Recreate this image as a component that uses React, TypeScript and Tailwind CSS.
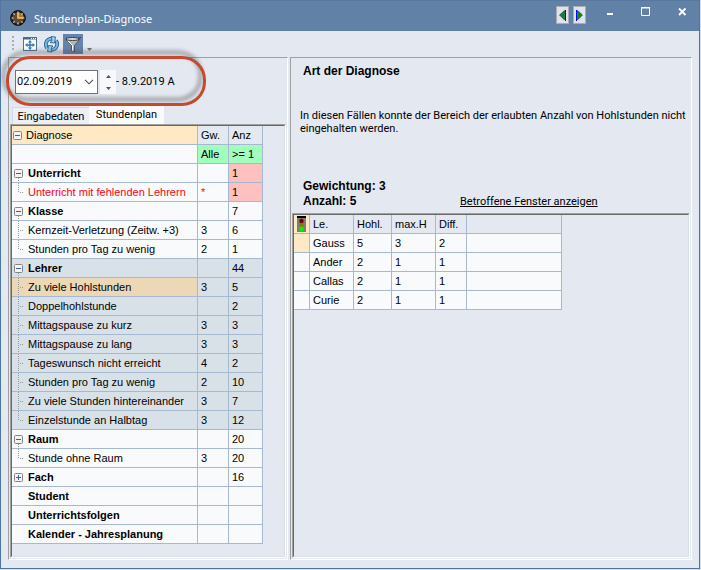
import { useState, type ReactNode } from "react";

type Item = { name: string; gw?: string; anz: string; alert?: boolean };
type Group = { name: string; anz: string; alert?: boolean; items?: Item[] };

const groups: Group[] = [
  {
    name: "Unterricht",
    anz: "1",
    alert: true,
    items: [{ name: "Unterricht mit fehlenden Lehrern", gw: "*", anz: "1", alert: true }],
  },
  {
    name: "Klasse",
    anz: "7",
    items: [
      { name: "Kernzeit-Verletzung (Zeitw. +3)", gw: "3", anz: "6" },
      { name: "Stunden pro Tag zu wenig", gw: "2", anz: "1" },
    ],
  },
  {
    name: "Lehrer",
    anz: "44",
    items: [
      { name: "Zu viele Hohlstunden", gw: "3", anz: "5" },
      { name: "Doppelhohlstunde", anz: "2" },
      { name: "Mittagspause zu kurz", gw: "3", anz: "3" },
      { name: "Mittagspause zu lang", gw: "3", anz: "3" },
      { name: "Tageswunsch nicht erreicht", gw: "4", anz: "2" },
      { name: "Stunden pro Tag zu wenig", gw: "2", anz: "10" },
      { name: "Zu viele Stunden hintereinander", gw: "3", anz: "7" },
      { name: "Einzelstunde an Halbtag", gw: "3", anz: "12" },
    ],
  },
  { name: "Raum", anz: "20", items: [{ name: "Stunde ohne Raum", gw: "3", anz: "20" }] },
  { name: "Fach", anz: "16", items: [] },
  { name: "Student", anz: "" },
  { name: "Unterrichtsfolgen", anz: "" },
  { name: "Kalender - Jahresplanung", anz: "" },
];

const teachers = [
  ["Gauss", "5", "3", "2"],
  ["Ander", "2", "1", "1"],
  ["Callas", "2", "1", "1"],
  ["Curie", "2", "1", "1"],
];

const cell = "h-[19px] overflow-hidden border-r border-b border-[#a6b9d1] p-0 text-left font-normal";

const ToggleBox = ({ open, line }: { open: boolean; line?: boolean }) => (
  <svg width="16" height="18" viewBox="0 0 16 18" className="block">
    {line && <path d="M6.5 14V18" stroke="#9a9a9a" strokeDasharray="1 1" />}
    <rect x="2.5" y="5.5" width="8" height="8" rx="1" fill="#f4f4f4" stroke="#858585" />
    <path d={open ? "M4 9.5H9" : "M4 9.5H9M6.5 7V12"} stroke="#3f5fa8" />
  </svg>
);

const Branch = ({ last }: { last: boolean }) => (
  <svg width="16" height="18" viewBox="0 0 16 18" className="block shrink-0">
    <path d={last ? "M6.5 0V10" : "M6.5 0V18"} stroke="#9a9a9a" strokeDasharray="1 1" />
    <path d="M8 9.5H12" stroke="#9a9a9a" strokeDasharray="1 1" />
  </svg>
);

const Sunken = ({ children }: { children: ReactNode }) => (
  <div className="mx-px mb-px flex flex-1 flex-col border border-t-[#a0a0a0] border-r-white border-b-white border-l-[#a0a0a0]">
    <div className="flex-1 border border-t-[#696969] border-r-[#dbe0e6] border-b-[#dbe0e6] border-l-[#696969]">
      {children}
    </div>
  </div>
);

const TitleBar = () => (
  <header className="flex h-[31px] shrink-0 items-start border-t border-[#57799f] bg-[#6182a6] pl-[9px] text-white">
    <svg width="16" height="16" viewBox="0 0 16 16" className="mt-[9px]">
      <circle cx="8" cy="8" r="7.4" fill="#1d1a19" stroke="#15100e" />
      <circle cx="8" cy="8" r="5.8" fill="#5c4a3c" />
      <path d="M8 8V2.2A5.8 5.8 0 0 1 13.8 8Z" fill="#a5764a" />
      <path
        d="M8 1.5V3.5M8 12.5V14.5M1.5 8H3.5M12.5 8H14.5M3.4 3.4L4.6 4.6M12.6 3.4L11.4 4.6M3.4 12.6L4.6 11.4M12.6 12.6L11.4 11.4"
        stroke="#e8dfd4"
        strokeWidth="1.2"
      />
      <path d="M8 3V8H13" fill="none" stroke="#ffc938" strokeWidth="1.6" />
    </svg>
    <h1 className="ml-2 pt-[10px] font-['Noto_Sans',sans-serif] text-[11px] leading-4">Stundenplan-Diagnose</h1>
    <div className="mt-[5px] ml-auto flex gap-1">
      <button aria-label="Zurück" className="h-[18px] w-[13px] border border-[#a9adb2] bg-[#dfe4ea]">
        <svg width="11" height="16" viewBox="0 0 11 16">
          <path d="M7.5 3.5V13L2.5 8Z" fill="#0b8a1c" stroke="#123c3a" strokeWidth=".6" />
          <path d="M8.5 3V14" stroke="#0000ff" />
        </svg>
      </button>
      <button aria-label="Vor" className="h-[18px] w-[13px] border border-[#a9adb2] bg-[#dfe4ea]">
        <svg width="11" height="16" viewBox="0 0 11 16">
          <path d="M3.5 3.5V13L8.5 8Z" fill="#0b8a1c" stroke="#123c3a" strokeWidth=".6" />
          <path d="M2.5 3V14" stroke="#0000ff" />
        </svg>
      </button>
    </div>
    <div className="mt-[5px] mr-3 ml-5 flex gap-7">
      <button aria-label="Minimieren">
        <svg width="7" height="11" viewBox="0 0 7 11">
          <path d="M1 8H7" stroke="#fff" strokeWidth="2" />
        </svg>
      </button>
      <button aria-label="Maximieren">
        <svg width="9" height="11" viewBox="0 0 9 11">
          <path d="M.5 1V9.5H8.5V1M0 2H9" fill="none" stroke="#fff" />
          <path d="M0 1.5H9" stroke="#fff" />
        </svg>
      </button>
      <button aria-label="Schließen">
        <svg width="9" height="11" viewBox="0 0 9 11">
          <path d="M1 2.5L7.5 9M7.5 2.5L1 9" stroke="#fff" strokeWidth="1.8" />
        </svg>
      </button>
    </div>
  </header>
);

const Toolbar = () => (
  <div className="flex h-[26px] shrink-0 items-start pt-[3px] pl-[11px]">
    <svg width="3" height="20" viewBox="0 0 3 20">
      <path d="M1 2V18" stroke="#a9aeb6" strokeWidth="2" strokeDasharray="2 2" />
    </svg>
    <button aria-label="Fenster anpassen" className="ml-2">
      <svg width="14" height="20" viewBox="0 0 14 20">
        <rect x=".5" y="3.5" width="13" height="13" fill="#fff" stroke="#54718f" />
        <path d="M0 4.5H14" stroke="#47688a" strokeWidth="2" />
        <path d="M8 4.5H9M10 4.5H11M12 4.5H13" stroke="#fff" />
        <path d="M7 7V15M3 11H11" stroke="#2f78b4" strokeWidth="1.4" />
        <path d="M7 6L5 8.5H9ZM7 16L5 13.5H9ZM2 11L4.5 9V13ZM12 11L9.5 9V13Z" fill="#2f78b4" />
      </svg>
    </button>
    <button aria-label="Aktualisieren" className="ml-[7px]">
      <svg width="15" height="20" viewBox="0 0 15 20">
        <g fill="none" strokeLinejoin="round">
          <path d="M3 14C.6 10.5 2 5 7.5 4.8M12 6.5C14.4 10 13 15.5 7.5 15.7" stroke="#1e537f" strokeWidth="3.6" />
          <path d="M3 14C.6 10.5 2 5 7.5 4.8M12 6.5C14.4 10 13 15.5 7.5 15.7" stroke="#72b9e8" strokeWidth="2" />
        </g>
        <path d="M7 2.5L11.5 3L10.5 9L6 8.5L8 6.8ZM8 18L3.5 17.5L4.5 11.5L9 12L7 13.8Z" fill="#9ed2f2" stroke="#1e537f" strokeWidth=".8" />
      </svg>
    </button>
    <button aria-label="Filter" aria-pressed="true" className="ml-1 bg-[#6583ab]">
      <svg width="20" height="20" viewBox="0 0 20 20">
        <path d="M3 5.5L8.5 11.5V16.5L11.5 17.5V11.5L16.5 5.5Z" fill="#b4b8bb" stroke="#3f444c" strokeWidth=".8" />
        <path d="M4.5 6.5L9.5 11.5V17" fill="none" stroke="#fff" />
        <ellipse cx="9.5" cy="5" rx="7" ry="1.4" fill="#e7eaec" stroke="#30353d" />
        <path d="M15 4.5L18 3.5" stroke="#30353d" />
      </svg>
    </button>
    <button aria-label="Weitere Optionen" className="ml-1">
      <svg width="6" height="20" viewBox="0 0 6 20">
        <path d="M0 14H5L2.5 17Z" fill="#6d7177" />
      </svg>
    </button>
  </div>
);

const DateRange = () => (
  <div className="relative flex items-start pt-3 pl-[6px] font-['Roboto',sans-serif]">
    <div className="flex h-6 w-[83px] items-center border border-[#6f7378] bg-white">
      <input
        aria-label="Datum von"
        defaultValue="02.09.2019"
        className="w-[64px] bg-transparent pl-px text-[11px] leading-4 outline-none"
      />
      <button aria-label="Kalender öffnen" className="ml-1">
        <svg width="10" height="6" viewBox="0 0 10 6" className="block">
          <path d="M1 .8L5 4.8L9 .8" fill="none" stroke="#44484d" strokeWidth="1.1" />
        </svg>
      </button>
    </div>
    <div className="ml-[2px] flex h-6 w-4 flex-col bg-[#f7f8fa]">
      <button aria-label="Woche vor" className="flex flex-1 items-center justify-center">
        <svg width="5" height="3" viewBox="0 0 5 3">
          <path d="M0 3L2.5 0L5 3Z" fill="#4d5157" />
        </svg>
      </button>
      <button aria-label="Woche zurück" className="flex flex-1 items-center justify-center">
        <svg width="5" height="3" viewBox="0 0 5 3">
          <path d="M0 0L2.5 3L5 0Z" fill="#4d5157" />
        </svg>
      </button>
    </div>
    <span className="pt-1 leading-4">- 8.9.2019 A</span>
    <div className="pointer-events-none absolute top-[-2px] left-[-3px] h-[50px] w-[200px] rounded-[24px] border-[3px] border-[#c54a30] drop-shadow-[-4px_-5px_2px_rgba(70,75,80,0.6)]" />
  </div>
);

const DiagnoseTable = () => {
  const [closed, setClosed] = useState<string[]>(["Fach"]);

  const toggle = (name: string) =>
    setClosed(closed.includes(name) ? closed.filter((n) => n !== name) : [...closed, name]);

  return (
    <table className="w-[251px] table-fixed border-separate border-spacing-0 bg-[#f9fafc] leading-[18px] whitespace-nowrap">
      <colgroup>
        <col className="w-[186px]" />
        <col className="w-[31px]" />
        <col className="w-[34px]" />
      </colgroup>
      <thead>
        <tr className="bg-[#e4e8f1]">
          <th className={`${cell} bg-[#ffe8c4]`}>
            <div className="flex">
              <button aria-label="Alle Gruppen" className="ml-[-1px] w-[15px]" onClick={() => setClosed([])}>
                <ToggleBox open />
              </button>
              Diagnose
            </div>
          </th>
          <th className={`${cell} pl-[3px]`}>Gw.</th>
          <th className={`${cell} pl-[3px]`}>Anz</th>
        </tr>
        <tr>
          <td className={cell} />
          <td className={`${cell} bg-[#a0ffbd] pl-[3px]`}>Alle</td>
          <td className={`${cell} bg-[#a0ffbd] pl-[3px]`}>&gt;= 1</td>
        </tr>
      </thead>
      {groups.map((group) => {
        const open = !closed.includes(group.name);
        return (
          <tbody key={group.name} className={group.name === "Lehrer" ? "bg-[#d9e1e8]" : ""}>
            <tr>
              <td className={cell}>
                <div className="flex font-bold">
                  {group.items ? (
                    <button aria-label={group.name} aria-expanded={open} onClick={() => toggle(group.name)}>
                      <ToggleBox open={open} line={open} />
                    </button>
                  ) : (
                    <span className="w-4" />
                  )}
                  {group.name}
                </div>
              </td>
              <td className={cell} />
              <td className={`${cell} pl-[3px] ${group.alert ? "bg-[#ffc0c0]" : ""}`}>{group.anz}</td>
            </tr>
            {open &&
              group.items?.map((item, i) => (
                <tr key={item.name}>
                  <td className={`${cell} ${item.name === "Zu viele Hohlstunden" ? "bg-[#ecd8b6]" : ""}`}>
                    <div className={`flex ${item.alert ? "text-[#ff0020]" : ""}`}>
                      <Branch last={i === group.items!.length - 1} />
                      {item.name}
                    </div>
                  </td>
                  <td className={`${cell} pl-[3px] ${item.alert ? "text-[#ff0020]" : ""}`}>{item.gw}</td>
                  <td className={`${cell} pl-[3px] ${item.alert ? "bg-[#ffc0c0]" : ""}`}>{item.anz}</td>
                </tr>
              ))}
          </tbody>
        );
      })}
    </table>
  );
};

const TeacherTable = () => (
  <table className="w-[268px] table-fixed border-separate border-spacing-0 bg-[#f9fafc] leading-[18px] whitespace-nowrap">
    <colgroup>
      <col className="w-[16px]" />
      <col className="w-[44px]" />
      <col className="w-[38px]" />
      <col className="w-[44px]" />
      <col className="w-[31px]" />
      <col className="w-[95px]" />
    </colgroup>
    <thead>
      <tr className="bg-[#e4e8f1]">
        <th aria-label="Status" className={`${cell} bg-[#ffe8c4]`}>
          <svg width="15" height="18" viewBox="0 0 15 18" className="block">
            <rect x="3" y="1" width="9" height="16" fill="#7d7d7d" />
            <rect x="3" y="1" width="9" height="2" fill="#000" />
            <circle cx="7.5" cy="6" r="2.2" fill="#7a0000" />
            <circle cx="7.5" cy="10" r="2.2" fill="#857b00" />
            <circle cx="7.5" cy="14" r="2.4" fill="#00f500" />
          </svg>
        </th>
        <th className={`${cell} pl-[3px]`}>Le.</th>
        <th className={`${cell} pl-[3px]`}>Hohl.</th>
        <th className={`${cell} pl-[3px]`}>max.H</th>
        <th className={`${cell} pl-[3px]`}>Diff.</th>
        <th className={cell} />
      </tr>
    </thead>
    <tbody>
      {teachers.map((row, i) => (
        <tr key={row[0]}>
          <td className={`${cell} ${i === 0 ? "bg-[#ffe8c4]" : ""}`} />
          {row.map((value, j) => (
            <td key={j} className={`${cell} pl-[3px]`}>
              {value}
            </td>
          ))}
          <td className={cell} />
        </tr>
      ))}
    </tbody>
  </table>
);

const panel = "flex flex-col border border-t-[#a0a0a0] border-r-white border-b-white border-l-[#a0a0a0]";

const App = () => {
  return (
    <div className="flex min-h-screen bg-[#cfe0ee] pr-px pb-px font-['Liberation_Sans',sans-serif] text-[11px] text-black">
      <div className="flex min-w-0 flex-1 flex-col border-r border-b border-l border-[#4f76a3] bg-[#e4e8f0]">
        <TitleBar />
        <Toolbar />
        <main className="flex flex-1 gap-[2px] pr-[7px] pb-2 pl-[7px]">
          <section className={`${panel} w-[280px] shrink-0`}>
            <DateRange />
            <div role="tablist" className="mt-[11px] flex items-end pl-[3px] font-['Roboto',sans-serif]">
              <button
                role="tab"
                aria-selected="false"
                className="h-[17px] w-[77px] border-t border-l border-[#d5d9e0] bg-[#eceff4] leading-[15px]"
              >
                Eingabedaten
              </button>
              <button role="tab" aria-selected="true" className="h-[19px] w-[75px] bg-[#f9fafc] leading-[17px]">
                Stundenplan
              </button>
            </div>
            <Sunken>
              <DiagnoseTable />
            </Sunken>
          </section>
          <section className={`${panel} min-w-0 flex-1`}>
            <h2 className="pt-[5px] pl-3 text-[12px] leading-4 font-bold">Art der Diagnose</h2>
            <p className="mt-[30px] pr-1 pl-[9px] font-['Roboto',sans-serif] leading-[13px]">
              In diesen Fällen konnte der Bereich der erlaubten Anzahl von Hohlstunden nicht eingehalten werden.
            </p>
            <div className="mt-11 mb-1 flex items-end pl-3 text-[12px] leading-[15px] font-bold">
              <p className="w-[157px]">
                Gewichtung: 3<br />
                Anzahl: 5
              </p>
              <a href="#fenster" className="font-['Roboto',sans-serif] text-[11px] font-normal underline">
                Betroffene Fenster anzeigen
              </a>
            </div>
            <Sunken>
              <TeacherTable />
            </Sunken>
          </section>
        </main>
      </div>
    </div>
  );
};

export default App;
